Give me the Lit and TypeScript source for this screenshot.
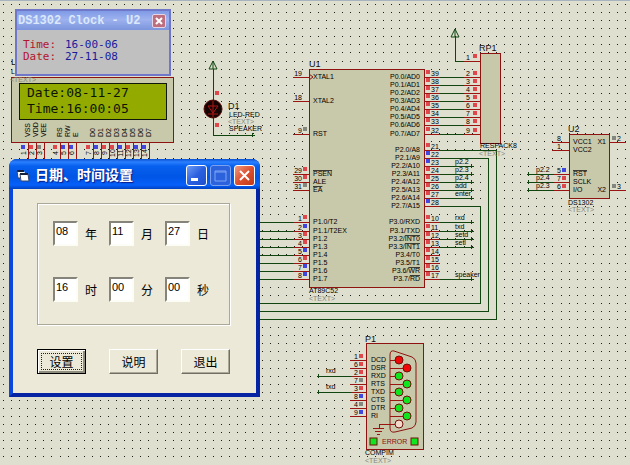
import { LitElement, html, svg, css } from "lit";
import { customElement, state } from "lit/decorators.js";

type Tone = "hi" | "lo" | "off";
type NamePart = string | { bar: string };

// Grid pitch is 202/25 px; rows count down from the first port line of U1.
const row = (k: number) => Math.round(77 + (k * 202) / 25);

const TILE = 202;
const gridDots = () => {
  const steps = Array.from({ length: 25 }, (_, i) => Math.round((i * TILE) / 25));
  return steps.map((y) => steps.map((x) => `M${x} ${y}h1v1h-1z`).join("")).join("");
};

const label = (x: number, y: number, text: string, cls = "t") =>
  svg`<text class=${cls} x=${x} y=${y}>${text}</text>`;

const parts = (name: NamePart[]) =>
  name.map((p) => (typeof p === "string" ? svg`<tspan>${p}</tspan>` : svg`<tspan class="bar">${p.bar}</tspan>`));

const probe = (x: number, y: number, tone?: Tone) =>
  tone ? svg`<rect class=${`probe ${tone}`} x=${x} y=${y} width="4" height="4"></rect>` : null;

const wire = (d: string) => svg`<path class="wire" d=${d}></path>`;
const pin = (d: string) => svg`<path class="pin" d=${d}></path>`;
const endMark = (x: number, y: number) => wire(`M${x - 1} ${y - 2}v4M${x - 2} ${y}h4`);

interface SidePin { k: number; no: string; name: NamePart[]; tone?: Tone; net?: string }

const LEFT: SidePin[] = [
  { k: 0, no: "19", name: ["XTAL1"] },
  { k: 3, no: "18", name: ["XTAL2"] },
  { k: 7, no: "9", name: ["RST"], tone: "off" },
  { k: 12, no: "29", name: [{ bar: "PSEN" }], tone: "hi" },
  { k: 13, no: "30", name: ["ALE"], tone: "hi" },
  { k: 14, no: "31", name: [{ bar: "EA" }], tone: "off" },
  ...(["P1.0/T2", "P1.1/T2EX", "P1.2", "P1.3", "P1.4", "P1.5", "P1.6", "P1.7"].map((n, i) => ({
    k: 18 + i,
    no: String(i + 1),
    name: [n],
    tone: ([0, 2, 3, 5].includes(i) ? "hi" : "lo") as Tone,
  }))),
];

const RIGHT: SidePin[] = [
  ...Array.from({ length: 8 }, (_, i) => ({ k: i, no: String(39 - i), name: [`P0.${i}/AD${i}`], tone: "hi" as Tone })),
  ...Array.from({ length: 8 }, (_, i) => ({
    k: 9 + i,
    no: String(21 + i),
    name: [`P2.${i}/A${8 + i}`],
    tone: ([1, 2, 7].includes(i) ? "lo" : "hi") as Tone,
    net: ["", "", "p2.2", "p2.3", "p2.4", "add", "enter", ""][i],
  })),
  { k: 18, no: "10", name: ["P3.0/RXD"], tone: "hi", net: "rxd" },
  { k: 19, no: "11", name: ["P3.1/TXD"], tone: "hi", net: "txd" },
  { k: 20, no: "12", name: ["P3.2/", { bar: "INT0" }], tone: "hi", net: "setd" },
  { k: 21, no: "13", name: ["P3.3/", { bar: "INT1" }], tone: "hi", net: "setl" },
  { k: 22, no: "14", name: ["P3.4/T0"], tone: "hi" },
  { k: 23, no: "15", name: ["P3.5/T1"], tone: "hi" },
  { k: 24, no: "16", name: ["P3.6/", { bar: "WR" }], tone: "hi" },
  { k: 25, no: "17", name: ["P3.7/", { bar: "RD" }], tone: "hi", net: "speaker" },
];

const LCD_PINS: { x: number; name: string; tone: Tone }[] = [
  { x: 27, name: "VSS", tone: "lo" },
  { x: 35, name: "VDD", tone: "hi" },
  { x: 43, name: "VEE", tone: "off" },
  { x: 59, name: "RS", tone: "hi" },
  { x: 67, name: "RW", tone: "lo" },
  { x: 75, name: "E", tone: "lo" },
  { x: 92, name: "D0", tone: "hi" },
  { x: 100, name: "D1", tone: "lo" },
  { x: 108, name: "D2", tone: "hi" },
  { x: 116, name: "D3", tone: "hi" },
  { x: 124, name: "D4", tone: "lo" },
  { x: 132, name: "D5", tone: "hi" },
  { x: 140, name: "D6", tone: "lo" },
  { x: 148, name: "D7", tone: "lo" },
];

const COM_PINS: { no: string; name: string; tone: Tone; lamp: string }[] = [
  { no: "1", name: "DCD", tone: "hi", lamp: "red" },
  { no: "6", name: "DSR", tone: "hi", lamp: "red" },
  { no: "2", name: "RXD", tone: "hi", lamp: "green" },
  { no: "7", name: "RTS", tone: "off", lamp: "green" },
  { no: "3", name: "TXD", tone: "hi", lamp: "green" },
  { no: "8", name: "CTS", tone: "lo", lamp: "green" },
  { no: "4", name: "DTR", tone: "off", lamp: "green" },
  { no: "9", name: "RI", tone: "lo", lamp: "green" },
];

@customElement("schematic-sheet")
export class SchematicSheet extends LitElement {
  static styles = css`
    :host { display: block; }
    .sheet { display: block; width: 100%; height: 100%; background: #dedfce; }
    text { font-family: "Liberation Sans", Arial, sans-serif; white-space: pre; }
    .t { font-size: 7px; fill: #000; }
    .end { font-size: 7px; text-anchor: end; }
    .mid { font-size: 7px; text-anchor: middle; }
    .ref { font-size: 9px; fill: #111; }
    .note { font-size: 7px; fill: #85867c; }
    .err { font-size: 7px; fill: #8a1010; }
    .lcd { font-family: "DejaVu Sans Mono", monospace; font-size: 13px; fill: #0c1400; }
    .bar { text-decoration: overline; }
    .dots { fill: #1c1c18; }
    .wire { stroke: #11450f; fill: none; shape-rendering: crispEdges; }
    .pin { stroke: #9a1512; fill: none; shape-rendering: crispEdges; }
    .symbol { stroke: #11450f; fill: none; }
    .part { stroke: #8e1210; fill: #c8c8aa; shape-rendering: crispEdges; }
    .outline { stroke: #8e1210; fill: none; }
    .glass { fill: #93ab00; stroke: #10180a; shape-rendering: crispEdges; }
    .probe { shape-rendering: crispEdges; }
    .hi { fill: #e0474c; }
    .lo { fill: #4146de; }
    .off { fill: #84877e; }
    .lamp { stroke: #701008; }
    .red { fill: #f00808; }
    .green { fill: #10e620; }
    .blank { fill: #f3d9cc; }
    .led { fill: #140404; stroke: #5c0a08; }
    .ledmark { stroke: #b01414; fill: none; }
    .edge { fill: #a9b3bd; }
  `;

  private lcd() {
    return svg`
      ${label(11, 65, "LCD1", "ref")}
      ${label(11, 74, "LM016L")}
      <rect class="part" x="11" y="77" width="162" height="65"></rect>
      ${label(10, 82, "<TEXT>", "note")}
      <rect class="glass" x="19" y="83" width="147" height="36"></rect>
      ${label(27, 97, "Date:08-11-27", "lcd")}
      ${label(27, 113, "Time:16:00:05", "lcd")}
      ${LCD_PINS.map(
        (p, i) => svg`
          <text class="t" transform=${`translate(${p.x + 3} 137) rotate(-90)`}>${p.name}</text>
          ${pin(`M${p.x + 1} 142v23`)}
          ${probe(p.x - 6, 145, p.tone)}
          <text class="mid" transform=${`translate(${p.x - 1} 153) rotate(-90)`}>${i + 1}</text>`
      )}`;
  }

  private led() {
    return svg`
      <path class="symbol" d="M213 61l-4 8h8zM213 61v8"></path>
      ${wire("M213 69v66h41")}
      ${endMark(253, 135)}
      <circle class="led" cx="213" cy="109" r="9"></circle>
      <path class="ledmark" d="M208 106h10l-5 7zM208 114h10M213 101v16"></path>
      ${probe(215, 91, "hi")}${probe(215, 123, "hi")}
      ${label(228, 109, "D1", "ref")}
      ${label(229, 117, "LED-RED")}
      ${label(228, 124, "<TEXT>", "note")}
      ${label(229, 131, "SPEAKER")}`;
  }

  private mcu() {
    return svg`
      ${label(309, 67, "U1", "ref")}
      <rect class="part" x="309" y="69" width="115" height="218"></rect>
      <path class="outline" d="M309 74l4 3l-4 3"></path>
      ${LEFT.map((p) => {
        const y = row(p.k);
        return svg`
          ${p.k >= 18 ? wire(`M260 ${y}h33`) : null}
          ${pin(`M293 ${y}h16`)}
          ${label(302, y - 1, p.no, "end")}
          ${probe(303, y - 7, p.tone)}
          <text class="t" x="313" y=${y + 2}>${parts(p.name)}</text>`;
      })}
      ${RIGHT.map((p) => {
        const y = row(p.k);
        return svg`
          ${pin(`M424 ${y}h16`)}
          ${p.net ? svg`${wire(`M440 ${y}h32`)}${endMark(472, y)}${label(455, y - 2, p.net)}` : null}
          ${label(431, y - 1, p.no)}
          ${probe(426, y - 7, p.tone)}
          <text class="end" x="420" y=${y + 2}>${parts(p.name)}</text>`;
      })}
      ${wire(`M440 ${row(16)}H480V303H260`)}
      ${wire(`M440 ${row(10)}H488V311H260`)}
      ${wire(`M440 ${row(9)}H496V319H260`)}
      ${label(309, 293, "AT89C52")}
      ${label(309, 301, "<TEXT>", "note")}`;
  }

  private pack() {
    return svg`
      <path class="symbol" d="M455 29l-4 8h8zM455 29v8"></path>
      ${wire("M455 37v24h9")}
      ${pin("M464 61h16")}
      ${label(470, 60, "1", "end")}
      ${probe(473, 54, "hi")}
      ${label(479, 51, "RP1", "ref")}
      <rect class="part" x="480" y="53" width="20" height="90"></rect>
      ${Array.from({ length: 8 }, (_, i) => {
        const y = row(i);
        return svg`
          ${wire(`M440 ${y}h24`)}${pin(`M464 ${y}h16`)}
          ${label(470, y - 1, String(i + 2), "end")}
          ${probe(473, y - 6, "hi")}`;
      })}
      ${label(480, 148, "RESPACK8")}
      ${label(479, 156, "<TEXT>", "note")}`;
  }

  private rtc() {
    const left: SidePin[] = [
      { k: 8, no: "8", name: ["VCC1"] },
      { k: 9, no: "1", name: ["VCC2"] },
      { k: 12, no: "5", name: [{ bar: "RST" }], tone: "lo", net: "p2.2" },
      { k: 13, no: "7", name: ["SCLK"], tone: "hi", net: "p2.4" },
      { k: 14, no: "6", name: ["I/O"], tone: "hi", net: "p2.3" },
    ];
    const right = [
      { k: 8, no: "2", name: "X1" },
      { k: 14, no: "3", name: "X2" },
    ];
    return svg`
      ${label(568, 132, "U2", "ref")}
      <rect class="part" x="569" y="134" width="40" height="64"></rect>
      ${left.map((p) => {
        const y = row(p.k);
        return svg`
          ${pin(`M552 ${y}h17`)}
          ${p.net ? svg`${wire(`M528 ${y}h26`)}${endMark(529, y)}${label(536, y - 2, p.net)}` : null}
          ${label(561, y - 1, p.no, "end")}
          ${probe(562, y - 6, p.tone)}
          <text class="t" x="573" y=${y + 2}>${parts(p.name)}</text>`;
      })}
      ${right.map((p) => {
        const y = row(p.k);
        return svg`
          ${pin(`M609 ${y}h17`)}
          ${probe(612, y - 6, "off")}
          ${label(617, y - 1, p.no)}
          ${label(606, y + 2, p.name, "end")}`;
      })}
      ${label(568, 205, "DS1302")}
      ${label(568, 212, "<TEXT>", "note")}`;
  }

  private com() {
    return svg`
      ${label(365, 342, "P1", "ref")}
      <rect class="part" x="366" y="343" width="57" height="106"></rect>
      <path class="outline" d="M394 351L412 357Q416 359 416 363V422Q416 426 412 428L395 432Q390 433 390 428V355Q390 350 394 351Z"></path>
      ${COM_PINS.map((p, i) => {
        const y = row(35 + i);
        const cx = i % 2 ? 407 : 399;
        const net = p.name === "RXD" ? "rxd" : p.name === "TXD" ? "txd" : "";
        return svg`
          ${pin(`M350 ${y}h16M390 ${y}H${cx}`)}
          ${net ? svg`${wire(`M318 ${y}h33`)}${endMark(319, y)}${label(326, y - 3, net)}` : null}
          ${label(358, y - 1, p.no, "end")}
          ${probe(359, y - 6, p.tone)}
          ${label(371, y + 2, p.name)}
          <circle class=${`lamp ${p.lamp}`} cx=${cx} cy=${y} r="4"></circle>`;
      })}
      ${pin("M399 424H379V428M373 428h11M375 431h7M377 434h3")}
      <circle class="lamp blank" cx="399" cy="424" r="4"></circle>
      <rect class="lamp green" x="370" y="438" width="7" height="7"></rect>
      <rect class="lamp green" x="411" y="438" width="7" height="7"></rect>
      ${label(382, 444, "ERROR", "err")}
      ${label(365, 455, "COMPIM")}
      ${label(365, 463, "<TEXT>", "note")}`;
  }

  render() {
    return html`
      <svg class="sheet" role="img" aria-label="Schematic">
        <defs>
          <pattern id="grid" x="3" y="4" width=${TILE} height=${TILE} patternUnits="userSpaceOnUse">
            <path class="dots" d=${gridDots()}></path>
          </pattern>
        </defs>
        <rect width="100%" height="100%" fill="url(#grid)"></rect>
        <rect class="edge" width="100%" height="1"></rect>
        ${this.lcd()}${this.led()}${this.mcu()}${this.pack()}${this.rtc()}${this.com()}
      </svg>
    `;
  }
}

@customElement("clock-popup")
export class ClockPopup extends LitElement {
  static styles = css`
    :host { display: block; }
    .window { box-sizing: border-box; height: 100%; border: 2px solid #7076c8; background: #c0c0c0; }
    .title {
      display: flex; align-items: center; justify-content: space-between;
      height: 19px; padding: 0 3px 0 1px;
      background: linear-gradient(#7f9ae6, #9db2ee 45%, #7c95dc);
    }
    h2 { margin: 0; color: #dbe8fb; font: bold 12px/18px "Liberation Mono", "Courier New", monospace; white-space: pre; }
    .close {
      display: flex; padding: 0; width: 14px; height: 14px; align-items: center; justify-content: center;
      border: 1px solid #e4d5e6; border-radius: 2px; background: #bd6f80;
    }
    .reading {
      margin: 0; padding: 9px 0 0 6px; display: grid; grid-template-columns: 42px auto;
      justify-content: start; font: 11px/12px "DejaVu Sans Mono", monospace;
    }
    dt { color: #b3152c; }
    dd { margin: 0; color: #1a1a9c; }
  `;

  render() {
    return html`
      <section class="window">
        <header class="title">
          <h2>DS1302 Clock - U2</h2>
          <button class="close" aria-label="Close">
            <svg width="8" height="8" viewBox="0 0 8 8"><path d="M1 1l6 6M7 1l-6 6" stroke="#fff" stroke-width="2"></path></svg>
          </button>
        </header>
        <dl class="reading">
          <dt>Time:</dt><dd>16-00-06</dd>
          <dt>Date:</dt><dd>27-11-08</dd>
        </dl>
      </section>
    `;
  }
}

@customElement("time-dialog")
export class TimeDialog extends LitElement {
  static styles = css`
    :host { display: block; font: 12px/14px "Liberation Sans", "Noto Sans CJK SC", sans-serif; }
    .window {
      box-sizing: border-box; border: 4px solid; border-top: 0; border-radius: 8px 8px 0 0;
      background: #0a3fd0; border-color: #0a3fd0 #0424a4 #0424a4 #0a48dc;
    }
    .title {
      display: flex; align-items: center; height: 30px; margin: 0 -4px; padding: 3px 5px 0 7px; gap: 3px;
      box-sizing: border-box; border-radius: 8px 8px 0 0; color: #fff;
      background: linear-gradient(#0a50d0, #2a80ff 3px, #0860ee 7px, #0055e5 18px, #0660fa 26px, #0040c0);
    }
    .app { flex: none; }
    h1 {
      flex: 1; margin: 0; padding: 0 0 3px 2px; font: bold 14px/20px "Noto Sans CJK SC", sans-serif;
      text-shadow: 1px 1px 1px #0a1883; white-space: nowrap;
    }
    .cap {
      display: flex; align-items: center; justify-content: center; padding: 0; box-sizing: border-box;
      width: 21px; height: 21px; border: 1px solid #fff; border-radius: 3px;
      background: linear-gradient(135deg, #6f9cf4, #2a60e0 50%, #1c4fcc);
    }
    .cap:disabled { border-color: #7aa0f0; background: #2c62dc; }
    .cap.close { background: linear-gradient(135deg, #f09a80, #dc5030 50%, #c03a18); }
    .body { padding: 14px 26px 19px 24px; background: #ece9d8; }
    fieldset {
      margin: 0; padding: 17px 15px 22px; border: 1px solid #aca899; min-width: 0;
      box-shadow: 1px 1px #fff, inset 1px 1px #fff;
      display: grid; grid-template-columns: repeat(3, 49px); gap: 31px 7px;
    }
    .field { display: flex; align-items: center; gap: 7px; }
    .unit { padding-top: 3px; }
    input {
      box-sizing: border-box; width: 25px; height: 25px; margin: 0; padding: 0 0 6px 1px; outline: 0; border-radius: 0;
      border: 2px solid; border-color: #85837a #fdfdf8 #fdfdf8 #85837a; background: #fff; color: #000;
      font: 11px/14px "Liberation Sans", sans-serif;
    }
    .actions { display: flex; gap: 23px; margin-top: 24px; }
    .push {
      flex: none; width: 49px; height: 25px; padding: 0; box-sizing: border-box; border-radius: 0;
      border: 1px solid; border-color: #fff #716f64 #716f64 #fff; box-shadow: inset -1px -1px #aca899;
      background: #ece9d8; color: #000; font: 12px/14px "Noto Sans CJK SC", sans-serif;
    }
    .push.default {
      border-color: #000; box-shadow: inset 1px 1px #fff, inset -2px -2px #8f8c80;
      outline: 1px dotted #222; outline-offset: -5px;
    }
  `;

  @state() private rows = [
    [["08", "年"], ["11", "月"], ["27", "日"]],
    [["16", "时"], ["00", "分"], ["00", "秒"]],
  ];

  render() {
    return html`
      <section class="window">
        <header class="title">
          <svg class="app" width="14" height="13" viewBox="0 0 14 13">
            <path d="M1 2h7l1 2h3l1 8H5L4 9H2z" fill="#fff"></path>
            <path d="M1 2h7M4 5h8" stroke="#14213c" stroke-width="2"></path>
            <path d="M1 2l1 7h2M4 5l1 7h8l-1-7" stroke="#33456c" fill="none"></path>
          </svg>
          <h1>日期、时间设置</h1>
          <button class="cap" aria-label="最小化">
            <svg width="13" height="13"><path d="M1 9h7v3H1z" fill="#fff"></path></svg>
          </button>
          <button class="cap" aria-label="最大化" disabled>
            <svg width="13" height="13"><path d="M1 2h11v10H1zM1 3h11" fill="none" stroke="#7ea4f4"></path></svg>
          </button>
          <button class="cap close" aria-label="关闭">
            <svg width="13" height="13"><path d="M2 2l9 9M11 2l-9 9" stroke="#fff" stroke-width="2"></path></svg>
          </button>
        </header>
        <div class="body">
          <fieldset aria-label="日期、时间">
            ${this.rows.flat().map(
              ([value, unit]) => html`<label class="field"><input .value=${value} /><span class="unit">${unit}</span></label>`
            )}
          </fieldset>
          <div class="actions">
            <button class="push default">设置</button>
            <button class="push">说明</button>
            <button class="push">退出</button>
          </div>
        </div>
      </section>
    `;
  }
}

@customElement("app-root")
export class AppRoot extends LitElement {
  static styles = css`
    :host { display: block; position: relative; height: 100vh; overflow: hidden; }
    .sheet { height: 100%; }
    .popup { position: absolute; left: 15px; top: 9px; width: 156px; height: 67px; }
    .dialog { position: absolute; left: 9px; top: 159px; width: 251px; }
  `;

  render() {
    return html`
      <schematic-sheet class="sheet"></schematic-sheet>
      <clock-popup class="popup"></clock-popup>
      <time-dialog class="dialog"></time-dialog>
    `;
  }
}
